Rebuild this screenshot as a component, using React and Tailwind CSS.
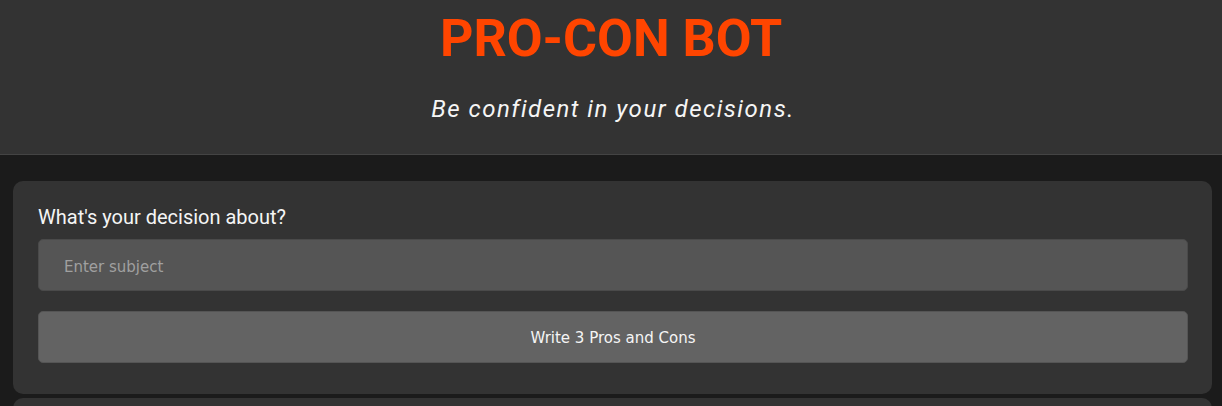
export default function App() {
  return (
    <div className="min-h-screen bg-[#1b1b1b] font-['Roboto',sans-serif]">
      <header className="bg-[#333333] border-b border-[#444444] h-[155px] flex flex-col items-center">
        <h1 className="mt-[9px] text-[52px] leading-[60px] font-bold text-[#ff4500]">PRO-CON BOT</h1>
        <p className="mt-[26px] ml-[4px] text-[24px] leading-[28px] italic tracking-[1.5px] text-[#f5f5f5]">
          Be confident in your decisions.
        </p>
      </header>
      <main className="pl-[13px] pr-[10px] pt-[26px] flex flex-col gap-[4px]">
        <section className="bg-[#333333] rounded-[10px] pl-[25px] pr-[24px] pt-[24px] pb-[31px]">
          <label className="block text-[20px] leading-[24px] text-[#f5f5f5] mb-[10px]">
            What's your decision about?
          </label>
          <input
            type="text"
            placeholder="Enter subject"
            className="block w-full h-[52px] rounded-[5px] border border-[#4a4a4a] bg-[#555555] px-[25px] pt-[3px] font-['DejaVu_Sans',sans-serif] text-[15px] text-white placeholder:text-[#a0a0a0] outline-none"
          />
          <button className="mt-[20px] w-full h-[52px] rounded-[5px] border border-[#555555] bg-[#636363] pt-[3px] font-['DejaVu_Sans',sans-serif] text-[15px] text-[#f5f5f5]">
            Write 3 Pros and Cons
          </button>
        </section>
        <section className="bg-[#333333] rounded-[10px] h-[200px]" />
      </main>
    </div>
  );
}
